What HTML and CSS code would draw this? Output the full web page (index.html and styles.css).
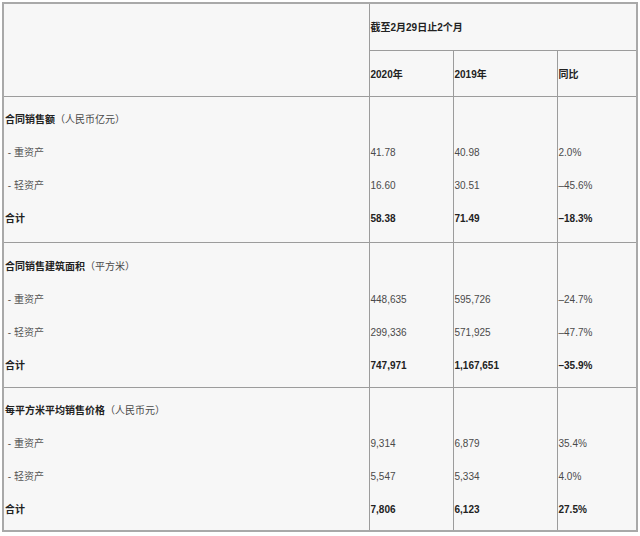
FILE: index.html
```html
<!DOCTYPE html>
<html lang="zh-CN">
<head>
<meta charset="utf-8">
<title>合同销售</title>
<link rel="stylesheet" href="styles.css">
</head>
<body>
<table class="sales">
  <colgroup>
    <col class="c-label">
    <col class="c-2020">
    <col class="c-2019">
    <col class="c-yoy">
  </colgroup>
  <thead>
    <tr class="h1">
      <th rowspan="2"></th>
      <th colspan="3">截至2月29日止2个月</th>
    </tr>
    <tr class="h2">
      <th>2020年</th>
      <th>2019年</th>
      <th>同比</th>
    </tr>
  </thead>
  <tbody>
    <tr class="sec s1">
      <td>
        <div class="ln"><b>合同销售额</b>（人民币亿元）</div>
        <div class="ln sub">&nbsp;- 重资产</div>
        <div class="ln sub">&nbsp;- 轻资产</div>
        <div class="ln tot">合计</div>
      </td>
      <td><div class="ln"></div><div class="ln">41.78</div><div class="ln">16.60</div><div class="ln tot">58.38</div></td>
      <td><div class="ln"></div><div class="ln">40.98</div><div class="ln">30.51</div><div class="ln tot">71.49</div></td>
      <td><div class="ln"></div><div class="ln">2.0%</div><div class="ln">–45.6%</div><div class="ln tot">–18.3%</div></td>
    </tr>
    <tr class="sec s2">
      <td>
        <div class="ln"><b>合同销售建筑面积</b>（平方米）</div>
        <div class="ln sub">&nbsp;- 重资产</div>
        <div class="ln sub">&nbsp;- 轻资产</div>
        <div class="ln tot">合计</div>
      </td>
      <td><div class="ln"></div><div class="ln">448,635</div><div class="ln">299,336</div><div class="ln tot">747,971</div></td>
      <td><div class="ln"></div><div class="ln">595,726</div><div class="ln">571,925</div><div class="ln tot">1,167,651</div></td>
      <td><div class="ln"></div><div class="ln">–24.7%</div><div class="ln">–47.7%</div><div class="ln tot">–35.9%</div></td>
    </tr>
    <tr class="sec s3">
      <td>
        <div class="ln"><b>每平方米平均销售价格</b>（人民币元）</div>
        <div class="ln sub">&nbsp;- 重资产</div>
        <div class="ln sub">&nbsp;- 轻资产</div>
        <div class="ln tot">合计</div>
      </td>
      <td><div class="ln"></div><div class="ln">9,314</div><div class="ln">5,547</div><div class="ln tot">7,806</div></td>
      <td><div class="ln"></div><div class="ln">6,879</div><div class="ln">5,334</div><div class="ln tot">6,123</div></td>
      <td><div class="ln"></div><div class="ln">35.4%</div><div class="ln">4.0%</div><div class="ln tot">27.5%</div></td>
    </tr>
  </tbody>
</table>
</body>
</html>
```

FILE: styles.css
```css
html, body {
  margin: 0;
  padding: 0;
  background: #ffffff;
}
body {
  padding: 2px 0 0 2px;
  font-family: "Liberation Sans", "Noto Sans CJK SC", sans-serif;
  font-size: 10px;
  color: #4a4a4a;
}
.sales {
  width: 634px;
  table-layout: fixed;
  border-collapse: collapse;
  border: 2px solid #a9a9a9;
  background: #f7f7f7;
}
.c-label { width: 366px; }
.c-2020 { width: 84px; }
.c-2019 { width: 104px; }
.c-yoy { width: 80px; }
.sales th,
.sales td {
  border: 1px solid #9c9c9c;
  padding: 0 0 0 1px;
  text-align: left;
  vertical-align: middle;
}
.sales th {
  font-weight: bold;
  color: #222222;
}
.h1 { height: 47px; }
.h2 { height: 46px; }
.sec td {
  vertical-align: top;
}
.s1 td {
  padding-top: 6px;
  padding-bottom: 7px;
}
.s2 td {
  padding-top: 7px;
  padding-bottom: 5px;
}
.s3 td {
  padding-top: 6px;
  padding-bottom: 4px;
}
.ln {
  height: 33px;
  line-height: 33px;
  white-space: nowrap;
}
.ln b {
  color: #222222;
}
.sub {
  color: #555555;
}
.tot {
  font-weight: bold;
  color: #222222;
}
```
